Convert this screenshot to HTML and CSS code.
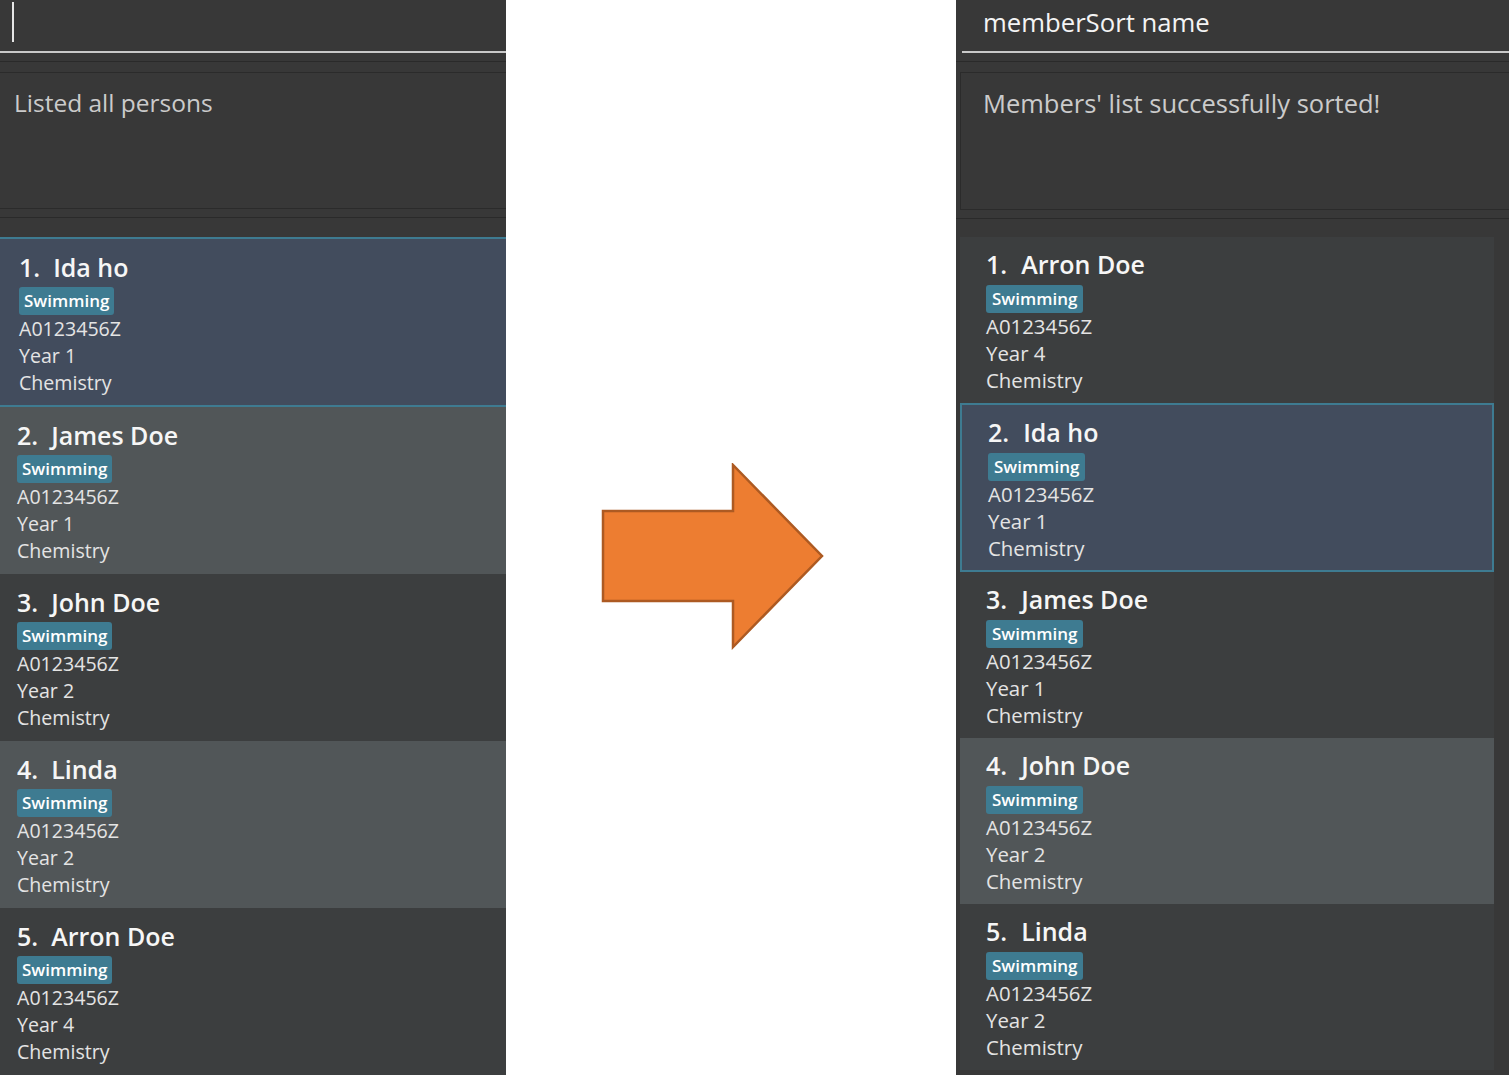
FILE: index.html
```html
<!DOCTYPE html>
<html lang="en">
<head>
<meta charset="utf-8">
<title>memberSort</title>
<link rel="stylesheet" href="styles.css">
</head>
<body>
<div class="stage">
  <div class="clip clip-left">
    <section class="panel panel-left">
      <div class="cmd"><span class="caret"></span></div>
      <div class="cmd-line"></div>
      <div class="band"><div class="band-line"></div></div>
      <div class="result">Listed all persons</div>
      <div class="band band-low"><div class="band-line"></div></div>
      <div class="list">
        <div class="card selected">
          <div class="name"><span class="idx">1.</span><span>Ida ho</span></div>
          <span class="tag">Swimming</span>
          <div class="detail">A0123456Z</div>
          <div class="detail">Year 1</div>
          <div class="detail">Chemistry</div>
        </div>
        <div class="card odd">
          <div class="name"><span class="idx">2.</span><span>James Doe</span></div>
          <span class="tag">Swimming</span>
          <div class="detail">A0123456Z</div>
          <div class="detail">Year 1</div>
          <div class="detail">Chemistry</div>
        </div>
        <div class="card">
          <div class="name"><span class="idx">3.</span><span>John Doe</span></div>
          <span class="tag">Swimming</span>
          <div class="detail">A0123456Z</div>
          <div class="detail">Year 2</div>
          <div class="detail">Chemistry</div>
        </div>
        <div class="card odd">
          <div class="name"><span class="idx">4.</span><span>Linda</span></div>
          <span class="tag">Swimming</span>
          <div class="detail">A0123456Z</div>
          <div class="detail">Year 2</div>
          <div class="detail">Chemistry</div>
        </div>
        <div class="card">
          <div class="name"><span class="idx">5.</span><span>Arron Doe</span></div>
          <span class="tag">Swimming</span>
          <div class="detail">A0123456Z</div>
          <div class="detail">Year 4</div>
          <div class="detail">Chemistry</div>
        </div>
      </div>
    </section>
  </div>

  <div class="between">
    <svg class="arrow" width="224" height="187" viewBox="0 0 224 187" aria-hidden="true">
      <polygon points="2,48 132,48 132,2 221,93 132,184 132,138 2,138" fill="#ED7D31" stroke="#AD5A22" stroke-width="2.5" stroke-linejoin="miter"/>
    </svg>
  </div>

  <div class="clip clip-right">
    <section class="panel panel-right">
      <div class="cmd">memberSort name</div>
      <div class="cmd-line"></div>
      <div class="band"><div class="band-line"></div></div>
      <div class="result">Members' list successfully sorted!</div>
      <div class="band band-low"><div class="band-line"></div></div>
      <div class="list-wrap">
        <div class="list">
          <div class="card">
            <div class="name"><span class="idx">1.</span><span>Arron Doe</span></div>
            <span class="tag">Swimming</span>
            <div class="detail">A0123456Z</div>
            <div class="detail">Year 4</div>
            <div class="detail">Chemistry</div>
          </div>
          <div class="card selected">
            <div class="name"><span class="idx">2.</span><span>Ida ho</span></div>
            <span class="tag">Swimming</span>
            <div class="detail">A0123456Z</div>
            <div class="detail">Year 1</div>
            <div class="detail">Chemistry</div>
          </div>
          <div class="card">
            <div class="name"><span class="idx">3.</span><span>James Doe</span></div>
            <span class="tag">Swimming</span>
            <div class="detail">A0123456Z</div>
            <div class="detail">Year 1</div>
            <div class="detail">Chemistry</div>
          </div>
          <div class="card odd">
            <div class="name"><span class="idx">4.</span><span>John Doe</span></div>
            <span class="tag">Swimming</span>
            <div class="detail">A0123456Z</div>
            <div class="detail">Year 2</div>
            <div class="detail">Chemistry</div>
          </div>
          <div class="card">
            <div class="name"><span class="idx">5.</span><span>Linda</span></div>
            <span class="tag">Swimming</span>
            <div class="detail">A0123456Z</div>
            <div class="detail">Year 2</div>
            <div class="detail">Chemistry</div>
          </div>
        </div>
        <div class="scrollbar"></div>
      </div>
    </section>
  </div>
</div>
</body>
</html>
```

FILE: styles.css
```css
* { box-sizing: border-box; }

html, body {
  margin: 0;
  padding: 0;
  background: #ffffff;
}

body {
  width: 1509px;
  height: 1075px;
  overflow: hidden;
  font-family: "Open Sans", "Noto Sans", "Liberation Sans", sans-serif;
}

.stage {
  display: flex;
  width: 1509px;
  height: 1075px;
}

.clip {
  flex: none;
  height: 1075px;
  overflow: hidden;
  background: #383838;
}

.clip-left { width: 506px; }
.clip-right { width: 553px; }

.panel {
  display: flex;
  flex-direction: column;
  height: 1075px;
  background: #383838;
}

.panel-left {
  width: 560px;
  margin-left: -13px;
}

.panel-right {
  width: 570px;
}

/* command box */
.cmd {
  height: 51px;
  padding-left: 27px;
  font-size: 25.7px;
  line-height: 46px;
  color: #f4f4f4;
  display: flex;
  align-items: flex-start;
}

.caret {
  display: block;
  width: 2px;
  height: 40px;
  margin-top: 2px;
  margin-left: -2px;
  background: #e6e6e6;
}

.cmd-line {
  height: 2px;
  margin-left: 6px;
  background: #c9c9c9;
}

/* separator bands */
.band {
  height: 19px;
  padding-top: 8px;
}

.band-line {
  height: 1px;
  background: #2a2a2a;
}

.band-low { height: 27px; }
.panel-left .band-low { height: 28px; }

/* result display */
.result {
  height: 138px;
  margin-left: 4px;
  border: 1px solid #2b2b2b;
  padding: 12px 0 0 22px;
  font-size: 25.5px;
  line-height: 36px;
  color: #cbcbcb;
}

.panel-left .result { font-size: 24.5px; }

/* list */
.list-wrap {
  display: flex;
  flex: 1;
  padding-left: 4px;
}

.panel-right .list {
  width: 534px;
  flex: none;
}

.scrollbar {
  width: 15px;
  flex: none;
  background: #383838;
}

.panel-left .list {
  padding-left: 4px;
  width: 540px;
}

.card {
  display: flex;
  flex-direction: column;
  align-items: flex-start;
  padding: 11px 0 9px 26px;
  background: #3c3e3f;
}

.card.odd { background: #515658; }

.card.selected {
  background: #424c5d;
  border: 2px solid #3e7b91;
  padding: 11px 0 8px 26px;
}

.panel-left .card { padding: 12px 0 10px 26px; }
.panel-left .card.selected { padding: 12px 0 9px 26px; }

.name {
  display: flex;
  font-size: 25px;
  font-weight: 600;
  line-height: 32px;
  color: #f6f6f6;
}

.idx { margin-right: 14px; }

.panel-left .idx { margin-right: 13px; }

.tag {
  margin-top: 5px;
  height: 28px;
  padding: 0 6px;
  border-radius: 3px;
  background: #3e7b91;
  color: #ffffff;
  font-size: 17px;
  font-weight: 600;
  line-height: 28px;
}

.panel-left .tag { margin-top: 4px; padding: 0 5px; }

.detail {
  font-size: 20.4px;
  line-height: 27px;
  color: #e4e4e4;
}

.panel-left .detail { font-size: 19.6px; }

/* middle arrow */
.between {
  flex: none;
  width: 450px;
  padding: 463px 0 0 95px;
  background: #ffffff;
}

.arrow { display: block; }
```
